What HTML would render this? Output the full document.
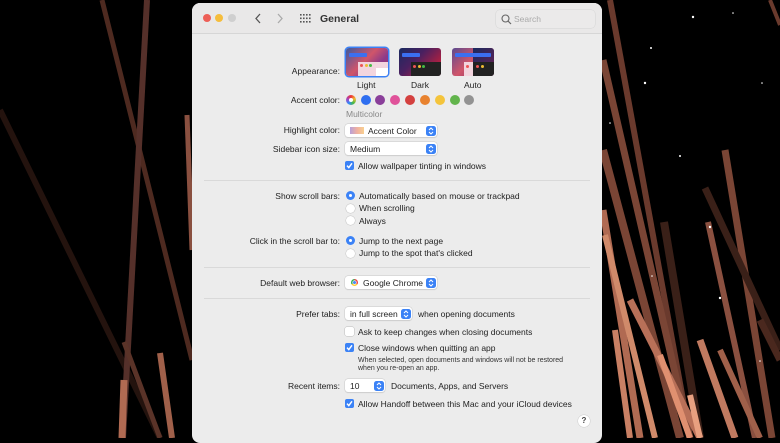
<!DOCTYPE html>
<html><head><meta charset="utf-8">
<style>
*{margin:0;padding:0;box-sizing:border-box}
body{width:780px;height:438px;overflow:hidden;background:#000;position:relative;font-family:"Liberation Sans",sans-serif;color:#222;font-size:8.5px}
#bg{position:absolute;left:0;top:0}
#win{position:absolute;left:192px;top:3px;width:410px;height:440px;background:#ececec;border-radius:8px;overflow:hidden}
#tb{position:absolute;left:0;top:0;width:410px;height:31px;background:#e9e8e8;border-bottom:1px solid #d6d6d6}
.t{position:absolute;white-space:nowrap;line-height:10px}
.r{text-align:right;width:200px}
.dot{position:absolute;border-radius:50%}
.pop{position:absolute;height:13px;background:#fff;border-radius:3px;box-shadow:0 0 0 .5px #c8c8c8,0 1px 1px rgba(0,0,0,.12)}
.stp{position:absolute;right:1px;top:1.5px;width:10px;height:10px;background:#3b82f6;border-radius:2.5px}
.stp svg{position:absolute;left:0;top:0}
.cb{position:absolute;width:9px;height:9px;border-radius:2px;background:#3b82f6}
.cb svg{position:absolute;left:0;top:0}
.cbo{position:absolute;width:9px;height:9px;border-radius:2px;background:#fff;box-shadow:0 0 0 .5px #bbb}
.ra{position:absolute;width:9px;height:9px;border-radius:50%;background:#3b82f6}
.ra:after{content:"";position:absolute;left:3px;top:3px;width:3px;height:3px;border-radius:50%;background:#fff}
.rao{position:absolute;width:9px;height:9px;border-radius:50%;background:#fff;box-shadow:0 0 0 .5px #c4c4c4}
.sep{position:absolute;left:12px;width:386px;height:1px;background:#d9d9d9}
.thumb{position:absolute;width:42px;height:28px;border-radius:3px;overflow:hidden}
</style></head><body>
<svg id="bg" width="780" height="438">
<g stroke-linecap="butt">
<line x1="0" y1="110" x2="160" y2="438" stroke="#24130e" stroke-width="6"/>
<line x1="102" y1="0" x2="192" y2="360" stroke="#4e2a20" stroke-width="5"/>
<line x1="147" y1="0" x2="123" y2="438" stroke="#55302a" stroke-width="6"/>
<line x1="124" y1="380" x2="122" y2="438" stroke="#b06a52" stroke-width="7"/>
<line x1="124" y1="342" x2="160" y2="438" stroke="#5a3328" stroke-width="5"/>
<line x1="160" y1="353" x2="172" y2="438" stroke="#a0604a" stroke-width="6"/>
<line x1="187" y1="115" x2="192" y2="250" stroke="#8a5040" stroke-width="5"/>
<line x1="610" y1="0" x2="690" y2="438" stroke="#6a3a2d" stroke-width="6"/>
<line x1="603" y1="60" x2="690" y2="438" stroke="#7a4535" stroke-width="7"/>
<line x1="603" y1="150" x2="680" y2="438" stroke="#7a4535" stroke-width="8"/>
<line x1="725" y1="150" x2="772" y2="438" stroke="#7a4535" stroke-width="7"/>
<line x1="705" y1="188" x2="780" y2="350" stroke="#3a2018" stroke-width="7"/>
<line x1="708" y1="222" x2="755" y2="438" stroke="#8a5040" stroke-width="6"/>
<line x1="664" y1="222" x2="700" y2="438" stroke="#3a2018" stroke-width="8"/>
<line x1="603" y1="210" x2="640" y2="438" stroke="#b06a52" stroke-width="7"/>
<line x1="605" y1="235" x2="655" y2="438" stroke="#d08a6a" stroke-width="6"/>
<line x1="630" y1="300" x2="700" y2="438" stroke="#b87058" stroke-width="7"/>
<line x1="700" y1="340" x2="735" y2="438" stroke="#c07a60" stroke-width="7"/>
<line x1="720" y1="350" x2="760" y2="438" stroke="#a0604a" stroke-width="6"/>
<line x1="660" y1="355" x2="690" y2="438" stroke="#e09070" stroke-width="6"/>
<line x1="615" y1="330" x2="630" y2="438" stroke="#c98064" stroke-width="6"/>
<line x1="690" y1="395" x2="700" y2="438" stroke="#e8a080" stroke-width="6"/>
<line x1="760" y1="320" x2="780" y2="360" stroke="#4a281e" stroke-width="7"/>
<line x1="770" y1="0" x2="780" y2="25" stroke="#6a3a2d" stroke-width="4"/>
</g>
<g fill="#fff">
<circle cx="693" cy="17" r="1.2"/><circle cx="733" cy="13" r=".8"/><circle cx="651" cy="48" r="1"/><circle cx="645" cy="83" r="1.2"/><circle cx="762" cy="83" r=".8"/><circle cx="610" cy="123" r=".8"/><circle cx="680" cy="156" r="1"/><circle cx="710" cy="227" r="1.2"/><circle cx="720" cy="298" r="1.2"/><circle cx="652" cy="276" r=".8"/><circle cx="760" cy="361" r=".8"/>
</g>
</svg>
<div id="win">
<div id="tb">
<div class="dot" style="left:11px;top:11px;width:8px;height:8px;background:#ed5f57"></div>
<div class="dot" style="left:23px;top:11px;width:8px;height:8px;background:#f5bd3c"></div>
<div class="dot" style="left:36px;top:11px;width:8px;height:8px;background:#cfcfcf"></div>
<svg style="position:absolute;left:62px;top:10px" width="8" height="11"><path d="M6 1 L2 5.5 L6 10" fill="none" stroke="#555" stroke-width="1.3"/></svg>
<svg style="position:absolute;left:84px;top:10px" width="8" height="11"><path d="M2 1 L6 5.5 L2 10" fill="none" stroke="#aaa" stroke-width="1.3"/></svg>
<svg style="position:absolute;left:108px;top:11px" width="11" height="9" fill="#555">
<g><rect x="0" y="0" width="1.6" height="1.6"/><rect x="3" y="0" width="1.6" height="1.6"/><rect x="6" y="0" width="1.6" height="1.6"/><rect x="9" y="0" width="1.6" height="1.6"/>
<rect x="0" y="3.5" width="1.6" height="1.6"/><rect x="3" y="3.5" width="1.6" height="1.6"/><rect x="6" y="3.5" width="1.6" height="1.6"/><rect x="9" y="3.5" width="1.6" height="1.6"/>
<rect x="0" y="7" width="1.6" height="1.6"/><rect x="3" y="7" width="1.6" height="1.6"/><rect x="6" y="7" width="1.6" height="1.6"/><rect x="9" y="7" width="1.6" height="1.6"/></g></svg>
<div class="t" style="left:128px;top:10px;font-size:10.5px;font-weight:bold;color:#333;line-height:12px">General</div>
<div style="position:absolute;left:304px;top:7px;width:99px;height:18px;border-radius:4px;background:#ebeaea;box-shadow:0 0 0 .5px #d4d4d4"></div>
<svg style="position:absolute;left:309px;top:11px" width="11" height="11"><circle cx="4.5" cy="4.5" r="3.5" fill="none" stroke="#666" stroke-width="1.1"/><line x1="7" y1="7" x2="10" y2="10" stroke="#666" stroke-width="1.2"/></svg>
<div class="t" style="left:322px;top:11px;color:#aaa;font-size:8.5px">Search</div>
</div>

<div class="t r" style="left:-52px;top:63px">Appearance:</div>
<div class="thumb" style="left:154px;top:45px;box-shadow:0 0 0 1.5px #3b82f6;background:linear-gradient(135deg,#3a5aa0 0%,#d0556a 45%,#8a3a8a 70%,#c03050 100%)">
<div style="position:absolute;left:3px;top:5px;width:18px;height:4px;background:#3b6ff0;border-radius:1px"></div>
<div style="position:absolute;left:12px;top:14px;width:30px;height:14px;background:#f3d5de"></div>
<div style="position:absolute;left:30px;top:20px;width:12px;height:8px;background:#fff"></div>
<div class="dot" style="left:14px;top:16px;width:3px;height:3px;background:#e55"></div><div class="dot" style="left:18.5px;top:16px;width:3px;height:3px;background:#eb3"></div><div class="dot" style="left:23px;top:16px;width:3px;height:3px;background:#4b4"></div>
</div>
<div class="thumb" style="left:207px;top:45px;background:linear-gradient(135deg,#1a2a60 0%,#4a2060 40%,#b02040 80%,#701030 100%)">
<div style="position:absolute;left:3px;top:5px;width:18px;height:4px;background:#3b6ff0;border-radius:1px"></div>
<div style="position:absolute;left:12px;top:14px;width:30px;height:14px;background:#222"></div>
<div class="dot" style="left:14px;top:17px;width:3px;height:3px;background:#e55"></div><div class="dot" style="left:18.5px;top:17px;width:3px;height:3px;background:#eb3"></div><div class="dot" style="left:23px;top:17px;width:3px;height:3px;background:#4b4"></div>
</div>
<div class="thumb" style="left:260px;top:45px;background:linear-gradient(135deg,#5a4a90 0%,#d0556a 45%,#6a2060 100%)">
<div style="position:absolute;left:21px;top:0;width:21px;height:28px;background:linear-gradient(135deg,#1a2a60,#702050)"></div>
<div style="position:absolute;left:3px;top:5px;width:36px;height:4px;background:#3b6ff0;border-radius:1px"></div>
<div style="position:absolute;left:12px;top:14px;width:9px;height:14px;background:#f3d5de"></div>
<div style="position:absolute;left:21px;top:14px;width:21px;height:14px;background:#222"></div>
<div class="dot" style="left:14px;top:17px;width:3px;height:3px;background:#e55"></div><div class="dot" style="left:24px;top:17px;width:3px;height:3px;background:#e55"></div><div class="dot" style="left:29px;top:17px;width:3px;height:3px;background:#eb3"></div>
</div>
<div class="t" style="left:165px;top:77px">Light</div>
<div class="t" style="left:219px;top:77px">Dark</div>
<div class="t" style="left:272px;top:77px">Auto</div>

<div class="t r" style="left:-52px;top:92px">Accent color:</div>
<div class="dot" style="left:154px;top:92px;width:10px;height:10px;background:conic-gradient(#e33,#eb3,#4b4,#38f,#a4b,#e33)"><div class="dot" style="left:3px;top:3px;width:4px;height:4px;background:#fff"></div></div>
<div class="dot" style="left:169px;top:92px;width:10px;height:10px;background:#2f6ff0"></div>
<div class="dot" style="left:183px;top:92px;width:10px;height:10px;background:#8a3f9a"></div>
<div class="dot" style="left:198px;top:92px;width:10px;height:10px;background:#e0529a"></div>
<div class="dot" style="left:213px;top:92px;width:10px;height:10px;background:#d4403f"></div>
<div class="dot" style="left:228px;top:92px;width:10px;height:10px;background:#e8822f"></div>
<div class="dot" style="left:243px;top:92px;width:10px;height:10px;background:#f4c43c"></div>
<div class="dot" style="left:258px;top:92px;width:10px;height:10px;background:#62b44c"></div>
<div class="dot" style="left:272px;top:92px;width:10px;height:10px;background:#939393"></div>
<div class="t" style="left:154px;top:106px;color:#888">Multicolor</div>

<div class="t r" style="left:-52px;top:122px">Highlight color:</div>
<div class="pop" style="left:153px;top:121px;width:92px"><div style="position:absolute;left:5px;top:3px;width:14px;height:7px;background:linear-gradient(90deg,#b8a0d8,#f0b0a0,#f8d090)"></div><div class="t" style="left:23px;top:1.5px">Accent Color</div><div class="stp"><svg width="10" height="10"><path d="M3 4 L5 2 L7 4 M3 6 L5 8 L7 6" fill="none" stroke="#fff" stroke-width="1"/></svg></div></div>
<div class="t r" style="left:-52px;top:141px">Sidebar icon size:</div>
<div class="pop" style="left:153px;top:139px;width:92px"><div class="t" style="left:5px;top:1.5px">Medium</div><div class="stp"><svg width="10" height="10"><path d="M3 4 L5 2 L7 4 M3 6 L5 8 L7 6" fill="none" stroke="#fff" stroke-width="1"/></svg></div></div>
<div class="cb" style="left:153px;top:158px"><svg width="9" height="9"><path d="M2 4.6 L3.8 6.6 L7 2.3" fill="none" stroke="#fff" stroke-width="1.4"/></svg></div>
<div class="t" style="left:166px;top:158px">Allow wallpaper tinting in windows</div>
<div class="sep" style="top:177px"></div>

<div class="t r" style="left:-52px;top:188px">Show scroll bars:</div>
<div class="ra" style="left:154px;top:188px"></div><div class="t" style="left:167px;top:188px">Automatically based on mouse or trackpad</div>
<div class="rao" style="left:154px;top:201px"></div><div class="t" style="left:167px;top:200px">When scrolling</div>
<div class="rao" style="left:154px;top:213px"></div><div class="t" style="left:167px;top:213px">Always</div>
<div class="t r" style="left:-52px;top:233px">Click in the scroll bar to:</div>
<div class="ra" style="left:154px;top:233px"></div><div class="t" style="left:167px;top:233px">Jump to the next page</div>
<div class="rao" style="left:154px;top:246px"></div><div class="t" style="left:167px;top:245px">Jump to the spot that's clicked</div>
<div class="sep" style="top:264px"></div>

<div class="t r" style="left:-52px;top:275px">Default web browser:</div>
<div class="pop" style="left:153px;top:273px;width:92px"><div class="dot" style="left:6px;top:3px;width:7px;height:7px;background:conic-gradient(#e44 0 120deg,#fc3 0 240deg,#3a5 0)"><div class="dot" style="left:2px;top:2px;width:3px;height:3px;background:#4a8af4;box-shadow:0 0 0 .6px #fff"></div></div><div class="t" style="left:18px;top:1.5px">Google Chrome</div><div class="stp"><svg width="10" height="10"><path d="M3 4 L5 2 L7 4 M3 6 L5 8 L7 6" fill="none" stroke="#fff" stroke-width="1"/></svg></div></div>
<div class="sep" style="top:295px"></div>

<div class="t r" style="left:-52px;top:306px">Prefer tabs:</div>
<div class="pop" style="left:153px;top:304px;width:67px"><div class="t" style="left:5px;top:1.5px">in full screen</div><div class="stp"><svg width="10" height="10"><path d="M3 4 L5 2 L7 4 M3 6 L5 8 L7 6" fill="none" stroke="#fff" stroke-width="1"/></svg></div></div>
<div class="t" style="left:226px;top:306px">when opening documents</div>
<div class="cbo" style="left:153px;top:324px"></div><div class="t" style="left:166px;top:324px">Ask to keep changes when closing documents</div>
<div class="cb" style="left:153px;top:340px"><svg width="9" height="9"><path d="M2 4.6 L3.8 6.6 L7 2.3" fill="none" stroke="#fff" stroke-width="1.4"/></svg></div>
<div class="t" style="left:166px;top:340px">Close windows when quitting an app</div>
<div class="t" style="left:166px;top:353px;font-size:7px;color:#333">When selected, open documents and windows will not be restored</div>
<div class="t" style="left:166px;top:361px;font-size:7px;color:#333">when you re-open an app.</div>
<div class="t r" style="left:-52px;top:378px">Recent items:</div>
<div class="pop" style="left:153px;top:376px;width:40px"><div class="t" style="left:5px;top:1.5px">10</div><div class="stp"><svg width="10" height="10"><path d="M3 4 L5 2 L7 4 M3 6 L5 8 L7 6" fill="none" stroke="#fff" stroke-width="1"/></svg></div></div>
<div class="t" style="left:199px;top:378px">Documents, Apps, and Servers</div>
<div class="cb" style="left:153px;top:396px"><svg width="9" height="9"><path d="M2 4.6 L3.8 6.6 L7 2.3" fill="none" stroke="#fff" stroke-width="1.4"/></svg></div>
<div class="t" style="left:166px;top:396px">Allow Handoff between this Mac and your iCloud devices</div>
<div class="dot" style="left:386px;top:412px;width:12px;height:12px;background:#fff;box-shadow:0 0 0 .5px #ccc;text-align:center;font-size:8px;line-height:12px;font-weight:bold;color:#444">?</div>
</div>
</body></html>
